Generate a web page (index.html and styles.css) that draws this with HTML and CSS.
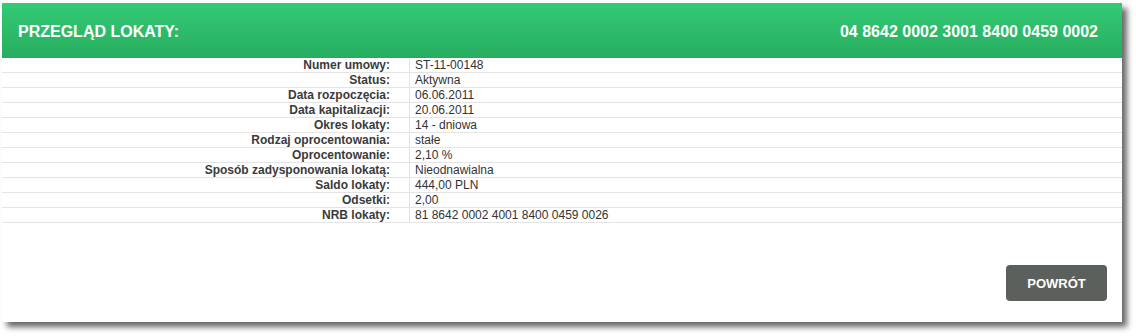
FILE: index.html
```html
<!DOCTYPE html>
<html lang="pl">
<head>
    <meta charset="UTF-8">
    <title>Przegląd lokaty</title>
    <link rel="stylesheet" href="styles.css">
</head>
<body>

<div class="panel">
    <div class="panel-header">
        <span class="title">PRZEGLĄD LOKATY:</span>
        <span class="account">04 8642 0002 3001 8400 0459 0002</span>
    </div>

    <div class="details">
        <div class="row"><div class="label">Numer umowy:</div><div class="value">ST-11-00148</div></div>
        <div class="row"><div class="label">Status:</div><div class="value">Aktywna</div></div>
        <div class="row"><div class="label">Data rozpoczęcia:</div><div class="value">06.06.2011</div></div>
        <div class="row"><div class="label">Data kapitalizacji:</div><div class="value">20.06.2011</div></div>
        <div class="row"><div class="label">Okres lokaty:</div><div class="value">14 - dniowa</div></div>
        <div class="row"><div class="label">Rodzaj oprocentowania:</div><div class="value">stałe</div></div>
        <div class="row"><div class="label">Oprocentowanie:</div><div class="value">2,10 %</div></div>
        <div class="row"><div class="label">Sposób zadysponowania lokatą:</div><div class="value">Nieodnawialna</div></div>
        <div class="row"><div class="label">Saldo lokaty:</div><div class="value">444,00 PLN</div></div>
        <div class="row"><div class="label">Odsetki:</div><div class="value">2,00</div></div>
        <div class="row"><div class="label">NRB lokaty:</div><div class="value">81 8642 0002 4001 8400 0459 0026</div></div>
    </div>

    <div class="actions">
        <button class="btn-back">POWRÓT</button>
    </div>
</div>

</body>
</html>
```

FILE: styles.css
```css
body {
    margin: 0;
    padding: 3px 14px 14px 2px;
    background: #fff;
    font-family: Arial, "Liberation Sans", sans-serif;
    color: #333;
}
.panel {
    background: #fff;
    box-shadow: 5px 5px 6px rgba(0,0,0,0.6);
    height: 319px;
    display: flex;
    flex-direction: column;
}
.panel-header {
    height: 53px;
    padding: 2px 24px 0 16px;
    background: linear-gradient(to bottom, #33ca76, #27ad5f);
    color: #fff;
    font-weight: bold;
    font-size: 16px;
    display: flex;
    align-items: center;
    justify-content: space-between;
}
.details {
    font-size: 12px;
}
.row {
    display: grid;
    grid-template-columns: 408px 1fr;
    height: 14px;
    border-bottom: 1px solid #e4e4e4;
}
.label,
.value {
    padding-top: 1px;
    line-height: 13px;
}
.label {
    text-align: right;
    font-weight: bold;
    color: #3a3a3a;
    padding-right: 19px;
    border-right: 1px solid #e4e4e4;
}
.value {
    padding-left: 5px;
}
.actions {
    margin-top: auto;
    display: flex;
    justify-content: flex-end;
    padding: 0 15px 21px 0;
}
.btn-back {
    width: 101px;
    height: 36px;
    background: #5b605d;
    color: #fff;
    border: none;
    border-radius: 4px;
    font-family: Arial, "Liberation Sans", sans-serif;
    font-weight: bold;
    font-size: 13px;
    cursor: pointer;
}
```
